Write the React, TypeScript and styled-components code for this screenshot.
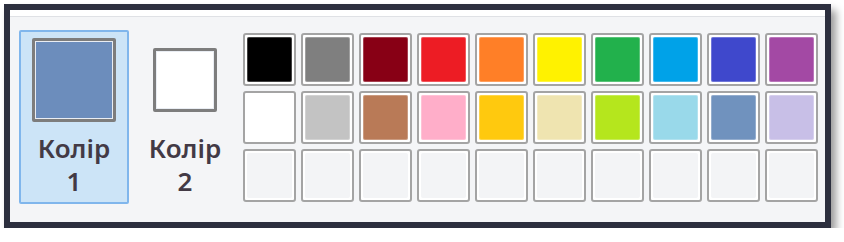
import React from "react";
import styled, { createGlobalStyle } from "styled-components";

const GlobalStyle = createGlobalStyle`
  html, body { margin: 0; padding: 0; background: #ffffff; }
  body { font-family: "Noto Sans", "Open Sans", sans-serif; }
`;

const Frame = styled.div`
  box-sizing: border-box;
  margin: 4px 0 0 4px;
  width: 827px;
  height: 224px;
  border: 6px solid #2c2f3e;
  background: #f4f5f7;
  box-shadow: 5px 6px 8px rgba(0, 0, 0, 0.4);
  display: flex;
  flex-direction: column;
`;

const TopBand = styled.div`
  height: 6px;
  background: #ffffff;
  border-bottom: 1px solid #dfe1e5;
`;

const Content = styled.div`
  display: flex;
  align-items: flex-start;
  padding: 13px 0 0 9px;
`;

const ColorButton = styled.div<{ $selected?: boolean }>`
  box-sizing: border-box;
  width: 110px;
  height: 174px;
  margin-right: 1px;
  border: 2px solid ${(p) => (p.$selected ? "#80b6ec" : "transparent")};
  border-radius: 2px;
  background: ${(p) => (p.$selected ? "#cce4f7" : "transparent")};
  display: flex;
  flex-direction: column;
  align-items: center;
`;

const SwatchArea = styled.div`
  height: 96px;
  display: flex;
  align-items: center;
  justify-content: center;
`;

const BigSwatch = styled.div<{ $size: number; $color: string }>`
  box-sizing: border-box;
  width: ${(p) => p.$size}px;
  height: ${(p) => p.$size}px;
  border: 3px solid #7d7d7d;
  border-radius: 2px;
  padding: 1px;
  background: #e9edf3;
  &::after {
    content: "";
    display: block;
    width: 100%;
    height: 100%;
    background: ${(p) => p.$color};
  }
`;

const Label = styled.div`
  margin-top: 4px;
  font-size: 26px;
  font-weight: 600;
  line-height: 33px;
  color: #433a45;
  text-align: center;
`;

const Palette = styled.div`
  margin: 3px 0 0 2px;
  display: grid;
  grid-template-columns: repeat(10, 53px);
  grid-auto-rows: 53px;
  gap: 5px;
`;

const Cell = styled.div<{ $color?: string }>`
  box-sizing: border-box;
  border: 2px solid #a4a4a4;
  border-radius: 3px;
  padding: 2px;
  background: #ffffff;
  &::after {
    content: "";
    display: block;
    width: 100%;
    height: 100%;
    border-radius: 2px;
    background: ${(p) => p.$color ?? "#f3f4f6"};
    box-shadow: ${(p) => (p.$color ? "inset 0 0 0 1px rgba(255,255,255,0.25)" : "none")};
  }
`;

const row1 = ["#000000", "#7f7f7f", "#880015", "#ed1c24", "#ff7f27", "#fff200", "#22b14c", "#00a2e8", "#3f48cc", "#a349a4"];
const row2 = ["#ffffff", "#c3c3c3", "#b97a57", "#ffaec9", "#ffc90e", "#efe4b0", "#b5e61d", "#99d9ea", "#7092be", "#c8bfe7"];

export default function App() {
  return (
    <>
      <GlobalStyle />
      <Frame>
        <TopBand />
        <Content>
          <ColorButton $selected>
            <SwatchArea>
              <BigSwatch $size={84} $color="#6c8dbc" />
            </SwatchArea>
            <Label>
              Колір
              <br />1
            </Label>
          </ColorButton>
          <ColorButton>
            <SwatchArea>
              <BigSwatch $size={64} $color="#ffffff" />
            </SwatchArea>
            <Label>
              Колір
              <br />2
            </Label>
          </ColorButton>
          <Palette>
            {row1.map((c, i) => (
              <Cell key={"a" + i} $color={c} />
            ))}
            {row2.map((c, i) => (
              <Cell key={"b" + i} $color={c} />
            ))}
            {Array.from({ length: 10 }).map((_, i) => (
              <Cell key={"c" + i} />
            ))}
          </Palette>
        </Content>
      </Frame>
    </>
  );
}
